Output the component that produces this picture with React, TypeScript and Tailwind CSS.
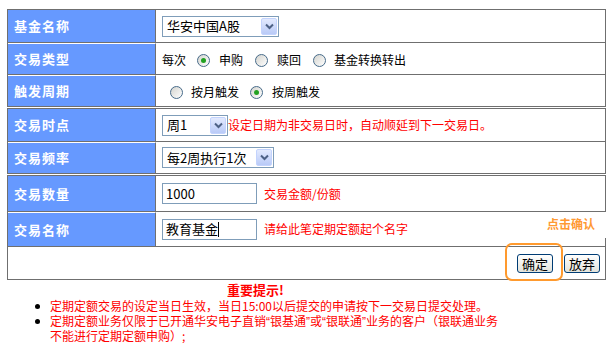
import React from "react";

const cjk = "font-['SimSun','Noto_Sans_CJK_SC',sans-serif]";

function Label({ text, first }: { text: string; first?: boolean }) {
  return (
    <div
      className={`flex w-[148px] shrink-0 items-center border-r border-[#6f6f6f] bg-[#6699ff] pl-[6px] text-[13px] font-bold tracking-[1px] text-white ${
        first ? "" : "border-t border-t-white"
      }`}
    >
      {text}
    </div>
  );
}

function Row({
  label,
  h,
  first,
  children,
}: {
  label: string;
  h: string;
  first?: boolean;
  children?: React.ReactNode;
}) {
  return (
    <div className={`flex ${h} ${first ? "" : "border-t border-[#6f6f6f]"}`}>
      <Label text={label} first={first} />
      <div className="flex flex-1 items-center pl-[6px]">{children}</div>
    </div>
  );
}

function Select({ text, w }: { text: string; w: string }) {
  return (
    <div
      className={`flex h-[21px] ${w} items-center justify-between border border-[#7f9db9] bg-white pl-[4px] pr-px text-[13px] text-black`}
    >
      <span>{text}</span>
      <div className="flex h-[17px] w-[16px] items-center justify-center rounded-[2px] border border-[#c3d3fd] bg-gradient-to-b from-[#e3eafe] to-[#b9caf7]">
        <svg width="9" height="7" viewBox="0 0 9 7">
          <path d="M1 1.5 L4.5 5 L8 1.5" stroke="#4d6185" strokeWidth="2" fill="none" />
        </svg>
      </div>
    </div>
  );
}

function Radio({ checked }: { checked?: boolean }) {
  return (
    <span className="flex h-[13px] w-[13px] items-center justify-center rounded-full border border-[#476b8a] bg-gradient-to-br from-[#d4d4cf] to-white">
      {checked && <span className="h-[5px] w-[5px] rounded-full bg-[#21a121]" />}
    </span>
  );
}

function Input({ children }: { children: React.ReactNode }) {
  return (
    <div className="flex h-[21px] w-[95px] items-center border border-[#7f9db9] bg-white pl-[3px] text-[13px] text-black">
      {children}
    </div>
  );
}

function Btn({ text }: { text: string }) {
  return (
    <button
      type="button"
      className="flex h-[19px] w-[36px] items-center justify-center rounded-[3px] border border-[#003c74] bg-gradient-to-b from-white to-[#e3e3db] text-[13px] leading-none text-black"
    >
      {text}
    </button>
  );
}

// narrow quote marks, like the bitmap font in the original
function Q({ c }: { c: string }) {
  return <span className="font-['Liberation_Sans',sans-serif]">{c}</span>;
}

export default function App() {
  return (
    <div className={`relative h-[349px] w-[616px] overflow-hidden bg-white text-[12px] ${cjk}`}>
      <div className="flex flex-col gap-px pl-[7px] pt-[9px]">
        {/* fund / type / trigger */}
        <div className="w-[599px] border border-[#6f6f6f]">
          <Row label="基金名称" h="h-[32px]" first>
            <Select text="华安中国A股" w="w-[117px]" />
          </Row>
          <Row label="交易类型" h="h-[32px]">
            <div className="flex items-center pt-[3px] text-black">
              <span>每次</span>
              <span className="ml-[11px]"><Radio checked /></span>
              <span className="ml-[9px]">申购</span>
              <span className="ml-[12px]"><Radio /></span>
              <span className="ml-[9px]">赎回</span>
              <span className="ml-[12px]"><Radio /></span>
              <span className="ml-[8px]">基金转换转出</span>
            </div>
          </Row>
          <Row label="触发周期" h="h-[32px]">
            <div className="flex items-center pl-[8px] pt-[3px] text-black">
              <Radio />
              <span className="ml-[8px]">按月触发</span>
              <span className="ml-[11px]"><Radio checked /></span>
              <span className="ml-[9px]">按周触发</span>
            </div>
          </Row>
        </div>

        {/* time / frequency */}
        <div className="w-[599px] border border-[#6f6f6f]">
          <Row label="交易时点" h="h-[32px]" first>
            <Select text="周1" w="w-[66px]" />
            <span className="text-[#ff0000]">设定日期为非交易日时，自动顺延到下一交易日。</span>
          </Row>
          <Row label="交易频率" h="h-[32px]">
            <Select text="每2周执行1次" w="w-[112px]" />
          </Row>
        </div>

        {/* amount / name / actions */}
        <div className="w-[599px] border border-[#6f6f6f]">
          <Row label="交易数量" h="h-[35px]" first>
            <Input>1000</Input>
            <span className="ml-[7px] text-[#ff0000]">交易金额/份额</span>
          </Row>
          <Row label="交易名称" h="h-[35px]">
            <Input>
              教育基金<span className="h-[15px] w-px bg-black" />
            </Input>
            <span className="ml-[7px] text-[#ff0000]">请给此笔定期定额起个名字</span>
          </Row>
          <div className="flex h-[33px] items-center justify-end gap-[11px] border-t border-[#6f6f6f] pr-[5px]">
            <Btn text="确定" />
            <Btn text="放弃" />
          </div>
        </div>
      </div>

      {/* notice */}
      <div className="flex h-[19px] items-center pl-[227px] text-[13px] font-bold text-[#ff0000]">
        重要提示!
      </div>
      <ul className="pl-[35px] text-[12px] leading-[14.5px] text-[#ff0000]">
        <li className="flex">
          <span className="mt-[5px] h-[5px] w-[5px] shrink-0 rounded-full bg-black" />
          <span className="ml-[10px] whitespace-nowrap">
            定期定额交易的设定当日生效，当日15:00以后提交的申请按下一交易日提交处理。
          </span>
        </li>
        <li className="flex">
          <span className="mt-[5px] h-[5px] w-[5px] shrink-0 rounded-full bg-black" />
          <span className="ml-[10px] whitespace-nowrap">
            定期定额业务仅限于已开通华安电子直销<Q c="“" />银基通<Q c="”" />或<Q c="“" />银联通<Q c="”" />业务的客户（银联通业务
            <br />
            不能进行定期定额申购）;
          </span>
        </li>
      </ul>

      {/* callouts */}
      <div className="absolute left-[545px] top-[212px] flex h-[26px] w-[66px] items-center bg-white pl-[2px] pb-[2px] text-[12px] font-bold text-[#ff9933]">
        点击确认
      </div>
      <div className="absolute left-[505px] top-[243px] h-[38px] w-[58px] rounded-[7px] border-2 border-[#ff9a2e]" />
    </div>
  );
}
